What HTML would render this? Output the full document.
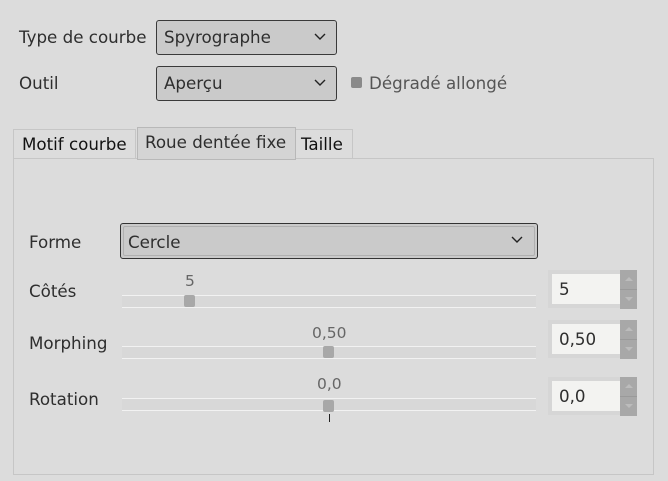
<!DOCTYPE html><html><head><style>
body{margin:0;width:668px;height:481px;background:#dcdcdc;font-family:"DejaVu Sans","Liberation Sans",sans-serif;font-size:16.7px;color:#2e2e2e;position:relative;overflow:hidden}
.a{position:absolute}
.combo{position:absolute;border:1px solid #3a3a3a;border-radius:3px;background:#cacaca;box-sizing:border-box}
.combo span{position:absolute;left:7px;top:6px}
.chev{position:absolute;right:10px;top:12px}
.track{position:absolute;left:122px;width:414px;height:11px;border-top:1px solid #f2f2f2;border-bottom:1px solid #f2f2f2;background:#d8d8d8}
.h{position:absolute;width:11px;height:12px;background:#a8a8a8;border-radius:2px}
.val{position:absolute;color:#666;font-size:15.5px}
.spin{position:absolute;left:548px;width:72px;height:38px;background:#d6d6d6}
.spin div{position:absolute;left:4px;top:4px;right:0;bottom:4px;background:#f3f3f1;padding-left:7px;line-height:31px}
.btn{position:absolute;left:620px;width:17px;height:39px;background:#a8a8a8}
.btn:after{content:"";position:absolute;left:0;right:0;top:19px;border-top:1px solid #9a9a9a}
.btn i{position:absolute;left:5px;width:0;height:0;border-left:4px solid transparent;border-right:4px solid transparent}
</style></head><body>
<div class="a" style="left:19px;top:27px">Type de courbe</div>
<div class="combo" style="left:156px;top:20px;width:181px;height:35px"><span>Spyrographe</span><svg class="chev" width="12" height="8"><path d="M1 1l5 5 5-5" stroke="#222" fill="none" stroke-width="1.4"/></svg></div>
<div class="a" style="left:19px;top:73px">Outil</div>
<div class="combo" style="left:156px;top:66px;width:181px;height:35px"><span>Aperçu</span><svg class="chev" width="12" height="8"><path d="M1 1l5 5 5-5" stroke="#222" fill="none" stroke-width="1.4"/></svg></div>
<div class="a" style="left:351px;top:77px;width:11px;height:11px;background:#8a8a8a;border-radius:2px"></div>
<div class="a" style="left:369px;top:73px;color:#555">Dégradé allongé</div>
<div class="a" style="left:13px;top:158px;width:639px;height:315px;border:1px solid #c6c6c6"></div>
<div class="a" style="left:13px;top:129px;width:123px;height:29px;border:1px solid #c6c6c6;border-bottom:0;box-sizing:border-box"></div>
<div class="a" style="left:22px;top:134px;color:#111">Motif courbe</div>
<div class="a" style="left:137px;top:127px;width:159px;height:33px;border:1px solid #b8b8b8;background:#d4d4d4;box-sizing:border-box"></div>
<div class="a" style="left:145px;top:132px">Roue dentée fixe</div>
<div class="a" style="left:296px;top:129px;width:57px;height:29px;border:1px solid #c6c6c6;border-left:0;border-bottom:0;box-sizing:border-box"></div>
<div class="a" style="left:301px;top:134px;color:#111">Taille</div>
<div class="a" style="left:29px;top:232px">Forme</div>
<div class="combo" style="left:120px;top:223px;width:418px;height:36px;border-color:#333"><div class="a" style="left:2px;top:2px;right:2px;bottom:2px;border:1px solid #b0b0b0;border-radius:2px"></div><span style="top:8px">Cercle</span><svg class="chev" width="12" height="8" style="right:14px"><path d="M1 1l5 5 5-5" stroke="#222" fill="none" stroke-width="1.4"/></svg></div>
<div class="a" style="left:29px;top:281px">Côtés</div>
<div class="val" style="left:185px;top:272px">5</div>
<div class="track" style="top:295px"></div><div class="h" style="left:184px;top:295px"></div>
<div class="spin" style="top:270px"><div>5</div></div><div class="btn" style="top:270px"><i style="top:7px;border-bottom:4px solid #bcbcbc"></i><i style="top:27px;border-top:4px solid #bcbcbc"></i></div>
<div class="a" style="left:29px;top:333px">Morphing</div>
<div class="val" style="left:312px;top:324px">0,50</div>
<div class="track" style="top:346px"></div><div class="h" style="left:323px;top:346px"></div>
<div class="spin" style="top:320px"><div>0,50</div></div><div class="btn" style="top:320px"><i style="top:7px;border-bottom:4px solid #bcbcbc"></i><i style="top:27px;border-top:4px solid #bcbcbc"></i></div>
<div class="a" style="left:29px;top:389px">Rotation</div>
<div class="val" style="left:317px;top:375px">0,0</div>
<div class="track" style="top:398px"></div><div class="h" style="left:323px;top:400px"></div>
<div class="a" style="left:329px;top:414px;width:1px;height:8px;background:#222"></div>
<div class="spin" style="top:377px"><div>0,0</div></div><div class="btn" style="top:377px"><i style="top:7px;border-bottom:4px solid #bcbcbc"></i><i style="top:27px;border-top:4px solid #bcbcbc"></i></div>
</body></html>
